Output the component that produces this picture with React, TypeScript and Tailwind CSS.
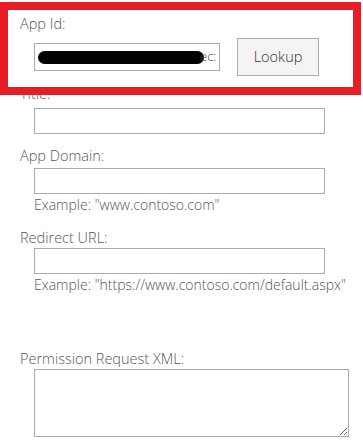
export default function App() {
  return (
    <div className="relative w-[363px] h-[446px] bg-white overflow-hidden font-['Open_Sans',sans-serif] font-light text-[#555]">
      <div className="pl-5 pt-[15px]">
        <label className="block h-[18px] leading-[18px] text-[14.5px]">App Id:</label>
        <div className="mt-[5px] flex items-center h-[38px]">
          <div className="ml-[14px] w-[186px] h-[28px] border border-[#ababab] bg-white flex items-center overflow-hidden pl-[3px]">
            <div className="w-[166px] h-[13px] rounded-full bg-black shrink-0" />
            <span className="-ml-[4px] text-[13px] text-[#444]">ec:</span>
          </div>
          <button className="ml-[17px] w-[82px] h-[38px] border border-[#ababab] bg-[#f4f4f4] text-[14.5px] text-[#333]">
            Lookup
          </button>
        </div>

        <label className="mt-[9px] block h-[18px] leading-[18px] text-[14.5px]">Title:</label>
        <input className="mt-[5px] ml-[14px] block w-[291px] h-[26px] border border-[#ababab] outline-none" />

        <label className="mt-[13px] block h-[18px] leading-[18px] text-[14.5px]">App Domain:</label>
        <input className="mt-[3px] ml-[14px] block w-[291px] h-[26px] border border-[#ababab] outline-none" />
        <p className="mt-[2px] ml-[14px] h-[18px] leading-[18px] text-[14px]">Example: "www.contoso.com"</p>

        <label className="mt-[15px] block h-[18px] leading-[18px] text-[14.5px]">Redirect URL:</label>
        <input className="mt-[1px] ml-[14px] block w-[291px] h-[26px] border border-[#ababab] outline-none" />
        <p className="mt-[2px] ml-[14px] h-[18px] leading-[18px] text-[14px] whitespace-nowrap">
          Example: "https://www.contoso.com/default.aspx"
        </p>

        <label className="mt-[56px] block h-[18px] leading-[18px] text-[14.5px]">Permission Request XML:</label>
        <textarea className="mt-[1px] ml-[14px] block w-[315px] h-[68px] border border-[#ababab] outline-none" />
      </div>

      <div className="absolute left-0 top-[2px] w-[361px] h-[93px] border-[8px] border-[#e71d25] pointer-events-none" />
    </div>
  );
}
